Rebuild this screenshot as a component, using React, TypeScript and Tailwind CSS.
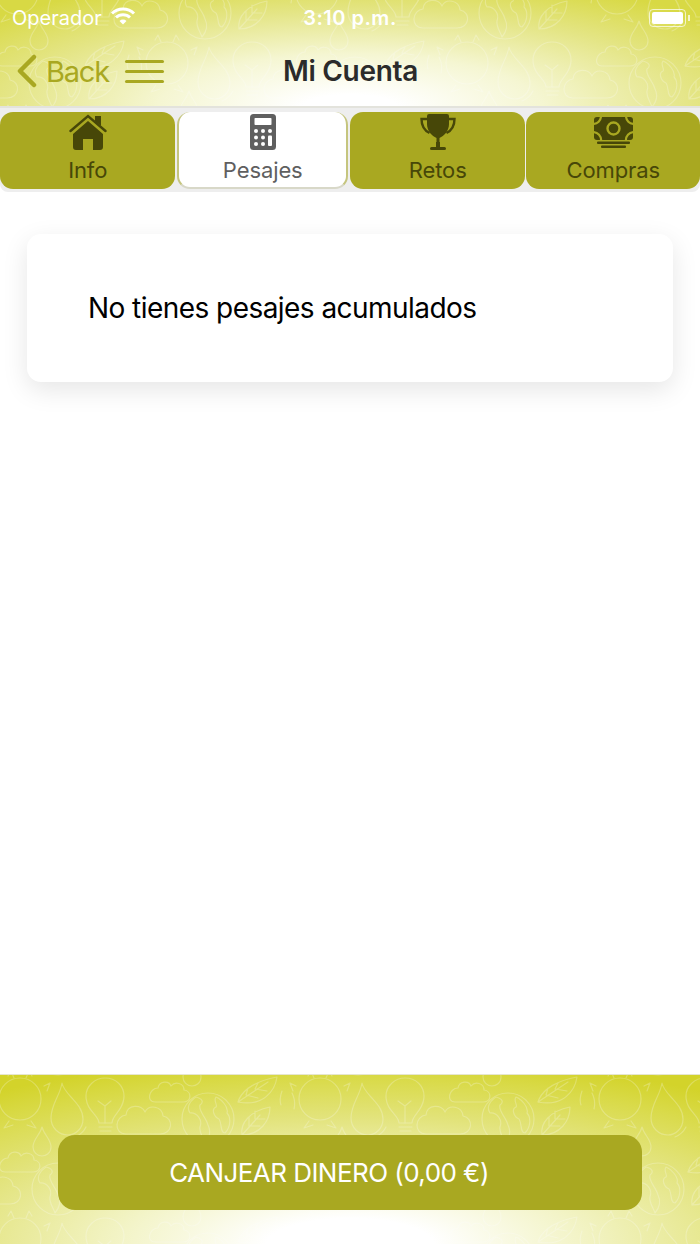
const Motif = () => (
  <g fill="none" stroke="#ffffff" strokeWidth="1.2" strokeLinecap="round" strokeLinejoin="round">
    {/* sun */}
    <circle cx="0" cy="0" r="21" />
    <path d="M-24 -13l-6 -3 3 8M24 -13l6 -3 -3 8M-11 22l-5 7 9 -3M11 22l5 7 -9 -3M-6 -21l-3 -7 -3 5M6 -21l3 -7 3 5" />
    {/* drop */}
    <path d="M42 -16c2 12 21 20 21 36 0 10 -8 16 -15 16 -9 0 -17 -7 -17 -17 0 -14 9 -22 11 -35z" />
    <path d="M66 28c-2 4 -6 8 -11 10" />
    {/* bulb */}
    <path d="M79 24c0 -8 -13 -12 -13 -27 0 -10 9 -18 19 -18 11 0 19 8 19 18 0 14 -12 19 -12 27z" />
    <path d="M79 28h13M80 32h11M78 2l7 5 6 -5M85 7v17" />
    {/* clouds */}
    <path d="M135 3h28c9 0 9 -11 1 -12 0 -7 -9 -9 -13 -4 -2 -6 -12 -5 -13 2 -9 0 -12 14 -3 14z" />
    <path d="M106 35h34c13 0 14 -16 3 -18 -1 -10 -14 -12 -18 -4 -3 -8 -18 -8 -19 3 -11 1 -13 19 0 19z" />
    {/* globe */}
    <circle cx="188" cy="20" r="26" />
    <path d="M176 -2c-6 4 -10 10 -6 16 6 -1 13 6 10 14 -1 6 3 10 5 16 5 -6 6 -12 3 -18 -2 -8 -10 -14 -8 -20 3 -2 4 -6 -4 -8zM196 -2c-3 4 2 8 0 10 -5 2 -2 10 3 12 3 4 1 14 6 14 6 -6 6 -16 2 -20 2 -6 -6 -14 -11 -16z" />
    {/* leaves */}
    <path d="M218 3c4 -14 22 -22 39 -25 -2 14 -14 30 -39 25zM218 3l30 -20M226 -4l2 -7M235 -10l3 -6M226 -4l12 3M235 -10l12 2" />
    <path d="M222 36c-2 -12 8 -24 28 -28 0 14 -10 28 -28 28zM222 36l18 -20M229 27l0 -9M229 27l11 0M235 20l0 -8M235 20l10 0" />
    {/* small drop */}
    <path d="M22 28c2 8 9 12 9 20 0 6 -5 9 -9 9 -5 0 -9 -4 -9 -9 0 -8 7 -12 9 -20z" />
    <path d="M272 -6q4 8 2 16M-38 -8q-3 8 -1 14" />
  </g>
);

const Pattern = ({ id, x, y }: { id: string; x: number; y: number }) => (
  <svg className="absolute inset-0 w-full h-full opacity-[0.24]" aria-hidden="true">
    <defs>
      <pattern id={id} x={x} y={y} width="300" height="140" patternUnits="userSpaceOnUse">
        {[[0, 0], [300, 0], [-300, 0], [150, 70], [-150, 70], [150, -70], [-150, -70], [0, 140], [300, 140], [-300, 140], [0, -140], [-300, -140]].map(([dx, dy]) => (
          <g key={`${dx}-${dy}`} transform={`translate(${dx} ${dy})`}>
            <Motif />
          </g>
        ))}
      </pattern>
    </defs>
    <rect width="100%" height="100%" fill={`url(#${id})`} />
  </svg>
);

const HomeIcon = () => (
  <svg width="38" height="36" viewBox="0 0 38 36" fill="#474708">
    <path d="M26 2h6v10l-6 -5z" />
    <path d="M19 7L4 20v13a3 3 0 003 3h7V25h10v11h7a3 3 0 003 -3V20z" />
    <path d="M1.500 17L19 2l17.500 15" fill="none" stroke="#474708" strokeWidth="2.400" strokeLinecap="round" />
  </svg>
);

const CalcIcon = () => (
  <svg width="26" height="36" viewBox="0 0 26 36">
    <rect width="26" height="36" rx="3.500" fill="#5f5f5f" />
    <rect x="4.500" y="4" width="17" height="7" rx="0.800" fill="#fff" />
    <g fill="#fff">
      <circle cx="6" cy="17" r="2" />
      <circle cx="13" cy="17" r="2" />
      <circle cx="20" cy="17" r="2" />
      <circle cx="6" cy="23.500" r="2" />
      <circle cx="13" cy="23.500" r="2" />
      <circle cx="6" cy="30" r="2" />
      <circle cx="13" cy="30" r="2" />
      <rect x="18" y="21.500" width="4" height="10.500" rx="1" />
    </g>
  </svg>
);

const TrophyIcon = () => (
  <svg width="36" height="36" viewBox="0 0 36 36" fill="#474708">
    <path d="M7 2a2 2 0 012 -2h18a2 2 0 012 2v8c0 7 -5 12 -9.500 14v6h-3v-6C12 22 7 17 7 10z" />
    <path d="M8 5H1.500c0 6 2 11 8 14M28 5h6.500c0 6 -2 11 -8 14" fill="none" stroke="#474708" strokeWidth="2.400" />
    <rect x="10" y="33" width="16" height="3" rx="1.500" />
    <rect x="16" y="28" width="4" height="6" />
  </svg>
);

const MoneyIcon = () => (
  <svg width="39" height="31" viewBox="0 0 39 31">
    <rect x="0" y="0" width="39" height="23" rx="3" fill="#474708" />
    <g fill="none" stroke="#a9a821" strokeWidth="2.200">
      <path d="M-1 7a8 8 0 008 -8M40 7a8 8 0 01-8 -8M-1 15a8 8 0 018 9M40 15a8 8 0 00-8 9" />
      <circle cx="19.500" cy="11.500" r="6" strokeWidth="2.400" />
    </g>
    <rect x="3" y="24.500" width="33" height="2.500" rx="1" fill="#474708" />
    <rect x="7" y="28.500" width="25" height="2.500" rx="1" fill="#474708" />
  </svg>
);

const Tab = ({ label, icon, active, className }: { label: string; icon: React.ReactNode; active?: boolean; className: string }) => (
  <div
    className={`${className} h-[77px] flex flex-col items-center rounded-[13px] pt-[2px] ${
      active
        ? 'bg-white text-[#5f5f5f] border-x-2 border-x-[#c5c57e] border-b-2 border-b-[#d8d8c8]'
        : 'bg-[#a9a821] text-[#474708]'
    }`}
  >
    <div className="h-[36px] flex items-center">{icon}</div>
    <span className="text-[22px] leading-[26px] mt-[7px] tracking-[-0.1px]">{label}</span>
  </div>
);

export default function App() {
  return (
    <div className="w-[700px] h-[1244px] flex flex-col bg-white font-['Inter',sans-serif] overflow-hidden">
      <header className="relative h-[108px] shrink-0 flex flex-col border-b-2 border-[#e3e3dc] bg-[radial-gradient(ellipse_480px_135px_at_350px_108px,#ffffff_10%,#f5f6d2_40%,#e4e585_72%,#d8d944_100%)]">
        <Pattern id="pat-top" x={167} y={63} />
        <div className="relative h-[36px] grid grid-cols-3 items-center px-3 text-white text-[20px]">
          <div className="flex items-center gap-[8px]">
            <span>Operador</span>
            <svg width="26" height="20" viewBox="0 0 26 20" fill="none" stroke="#fff" strokeWidth="3" className="-mt-[4px]">
              <path d="M2 7.500a15.500 15.500 0 0122 0M6 11.500a10 10 0 0114 0" />
              <path d="M13 18.500l-3.500 -3.500a5 5 0 017 0z" fill="#fff" stroke="none" />
            </svg>
          </div>
          <span className="text-center font-semibold tracking-wide">3:10 p.m.</span>
          <div className="flex justify-end items-center">
            <div className="w-[37px] h-[18px] rounded-[4px] border border-white/70 p-[2px]">
              <div className="w-full h-full rounded-[2px] bg-white" />
            </div>
            <div className="w-[2px] h-[6px] bg-white/70 ml-[2px] -mr-[2px]" />
          </div>
        </div>
        <div className="relative flex-1 grid grid-cols-3 items-center pl-[17px]">
          <div className="flex items-center">
            <svg width="20" height="34" viewBox="0 0 20 34" fill="none" stroke="#a9a821" strokeWidth="4.500" strokeLinecap="round" strokeLinejoin="round">
              <path d="M17 3L3 17l14 14" />
            </svg>
            <span className="ml-[9px] text-[#a9a821] text-[29px] leading-none tracking-[-1.2px]">Back</span>
            <div className="ml-[16px] w-[39px] flex flex-col gap-[7px]">
              <div className="h-[3px] rounded-full bg-[#a9a821]" />
              <div className="h-[3px] rounded-full bg-[#a9a821]" />
              <div className="h-[3px] rounded-full bg-[#a9a821]" />
            </div>
          </div>
          <h1 className="text-center text-[28px] font-semibold text-[#2b2b2b] -ml-[16px] leading-none whitespace-nowrap tracking-[-0.3px]">Mi Cuenta</h1>
        </div>
      </header>

      <nav className="h-[84px] shrink-0 bg-[#eeeeee] rounded-b-[8px] flex items-start pt-[4px]">
        <Tab className="w-[176px]" label="Info" icon={<HomeIcon />} />
        <Tab className="w-[171px] ml-[2px]" label="Pesajes" icon={<CalcIcon />} active />
        <Tab className="w-[176px] ml-[2px]" label="Retos" icon={<TrophyIcon />} />
        <Tab className="w-[174px] ml-[1px]" label="Compras" icon={<MoneyIcon />} />
      </nav>

      <main className="flex-1 px-[27px] pt-[42px]">
        <div className="h-[148px] rounded-[14px] bg-white flex items-center pl-[61px] shadow-[0_8px_26px_rgba(0,0,0,0.1)]">
          <p className="text-[28px] text-black leading-none tracking-[-0.55px]">No tienes pesajes acumulados</p>
        </div>
      </main>

      <footer className="relative h-[170px] shrink-0 flex items-start justify-center pt-[60px] border-t border-[#e6e6cf] bg-[radial-gradient(ellipse_600px_190px_at_350px_170px,#ffffff_14%,#f3f4c8_38%,#e2e37a_68%,#d9da48_88%,#d3d32a_100%)]">
        <Pattern id="pat-bottom" x={20} y={24} />
        <button className="relative w-[584px] h-[75px] rounded-[17px] bg-[#a9a821] text-white text-[26px] flex items-center justify-center border-none tracking-[-0.55px] pr-[42px]">
          CANJEAR DINERO (0,00 €)
        </button>
      </footer>
    </div>
  );
}
